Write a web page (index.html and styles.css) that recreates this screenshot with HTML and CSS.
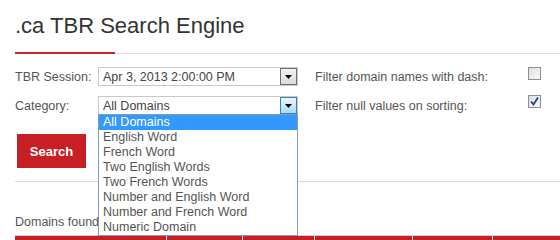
FILE: index.html
```html
<!DOCTYPE html>
<html lang="en">
<head>
    <meta charset="UTF-8">
    <title>.ca TBR Search Engine</title>
    <link rel="stylesheet" href="styles.css">
</head>
<body>
    <section id="wrap">
        <h1 class="title">.ca TBR Search Engine</h1>
        <div class="titleBar">
            <span class="red"></span>
            <span class="grey"></span>
        </div>

        <form class="searchForm">
            <div class="cols">
                <div class="col left">
                    <div class="row">
                        <label>TBR Session:</label>
                        <div class="select">
                            <span class="value">Apr 3, 2013 2:00:00 PM</span>
                            <span class="arrow"><svg width="7" height="4" viewBox="0 0 7 4"><polygon points="0,0 7,0 3.5,4" fill="#000"/></svg></span>
                        </div>
                    </div>
                    <div class="row">
                        <label>Category:</label>
                        <div class="select focus">
                            <span class="value">All Domains</span>
                            <span class="arrow"><svg width="7" height="4" viewBox="0 0 7 4"><polygon points="0,0 7,0 3.5,4" fill="#000"/></svg></span>
                            <ul class="dropList">
                                <li class="on">All Domains</li>
                                <li>English Word</li>
                                <li>French Word</li>
                                <li>Two English Words</li>
                                <li>Two French Words</li>
                                <li>Number and English Word</li>
                                <li>Number and French Word</li>
                                <li>Numeric Domain</li>
                            </ul>
                        </div>
                    </div>
                </div>
                <div class="col right">
                    <div class="row">
                        <label>Filter domain names with dash:</label>
                        <span class="check"></span>
                    </div>
                    <div class="row">
                        <label>Filter null values on sorting:</label>
                        <span class="check checked"><svg width="11" height="11" viewBox="0 0 11 11"><path d="M2 5.5 L4.5 8.5 L9 1.5" fill="none" stroke="#23419a" stroke-width="1.8"/></svg></span>
                    </div>
                </div>
            </div>
            <button type="button" class="btn">Search</button>
        </form>

        <div class="sep"></div>

        <p class="found">Domains found: 0</p>
        <div class="tableHead">
            <span style="width:152px"></span>
            <span style="width:76px"></span>
            <span style="width:72px"></span>
            <span style="width:98px"></span>
            <span style="width:80px"></span>
            <span class="last"></span>
        </div>
    </section>
</body>
</html>
```

FILE: styles.css
```css
/*reset*/
html,body{margin: 0;padding: 0;height: 100%;overflow: hidden;background: #fff;}
body,h1,p,ul,li{margin: 0;padding: 0;}
li{list-style: none;}
body{font: 12.5px "Liberation Sans", Arial, sans-serif;color: #555;}

#wrap{
    padding-left: 15px;
}

.title{
    margin-top: 13px;
    font: normal 22px/26px "Liberation Sans", Arial, sans-serif;
    color: #333;
}

.titleBar{
    display: flex;
    align-items: flex-end;
    height: 2px;
    margin-top: 13px;
}
.titleBar .red{
    width: 100px;
    height: 2px;
    background: #c9252b;
}
.titleBar .grey{
    flex: 1;
    height: 1px;
    background: #e0e0e0;
}

.searchForm{
    margin-top: 13px;
}
.cols{
    display: flex;
}
.col{
    display: flex;
    flex-direction: column;
    gap: 10px;
}
.col.left{
    width: 283px;
}
.col.right{
    margin-left: 17px;
    width: 226px;
}
.row{
    display: flex;
    align-items: center;
    height: 19px;
}
.row label{
    color: #555;
}
.col.left label{
    width: 83px;
}
.col.right label{
    flex: 1;
}

.select{
    position: relative;
    box-sizing: border-box;
    width: 200px;
    height: 19px;
    border: 1px solid #c9c9c9;
    display: flex;
    align-items: center;
    color: #444;
}
.select .value{
    flex: 1;
    padding-left: 4px;
}
.select .arrow{
    box-sizing: border-box;
    width: 17px;
    height: 17px;
    border: 1px solid #707070;
    background: linear-gradient(#f2f2f2, #dcdcdc);
    display: flex;
    align-items: center;
    justify-content: center;
}
.select.focus .arrow{
    border-color: #3c7fb1;
    background: linear-gradient(#eaf6fd, #a7d9f5);
}

.dropList{
    position: absolute;
    left: -1px;
    top: 17px;
    width: 200px;
    box-sizing: border-box;
    border: 1px solid #7f9db9;
    background: #fff;
    z-index: 2;
}
.dropList li{
    height: 15px;
    line-height: 15px;
    padding-left: 4px;
    color: #555;
}
.dropList li.on{
    background: #3399ff;
    color: #fff;
}

.check{
    align-self: flex-start;
    box-sizing: border-box;
    width: 13px;
    height: 13px;
    border: 1px solid #8f8f8f;
    background: linear-gradient(135deg, #dcdcdc, #fbfbfb);
    display: flex;
    align-items: center;
    justify-content: center;
}
.row + .row .check{
    margin-top: -1px;
}

.btn{
    display: block;
    margin: 19px 0 0 2px;
    width: 69px;
    height: 34px;
    border: 0;
    padding: 0;
    background: #c81f25;
    color: #fff;
    font: bold 13px "Liberation Sans", Arial, sans-serif;
    cursor: pointer;
}

.sep{
    margin-top: 13px;
    height: 1px;
    background: #dcdcdc;
}

.found{
    margin-top: 33px;
    line-height: 15px;
    color: #555;
}

.tableHead{
    display: flex;
    margin-top: 5px;
    height: 4px;
    border-top: 1px solid #cfcfcf;
}
.tableHead span{
    box-sizing: border-box;
    height: 100%;
    background: #c81f25;
    border-right: 1px solid #e9e9e9;
}
.tableHead span.last{
    flex: 1;
    border-right: 0;
}
```
